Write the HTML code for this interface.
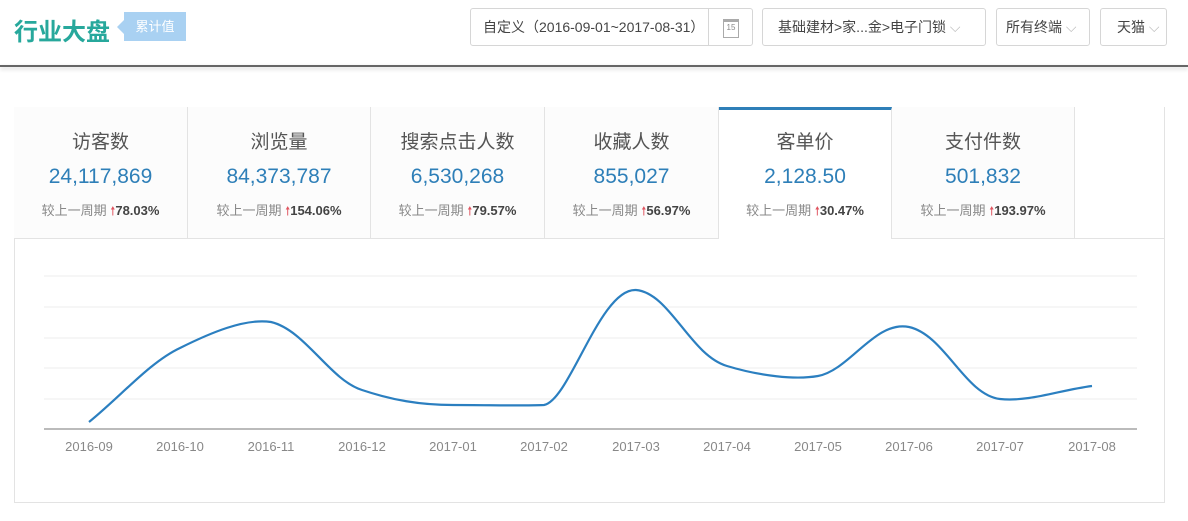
<html><head><style>
body{margin:0;width:1188px;height:521px;background:#fff;font-family:"Liberation Sans","Noto Sans CJK SC",sans-serif;position:relative;overflow:hidden}
.a{position:absolute}
.box{position:absolute;top:8px;height:38px;border:1px solid #d6d6d6;border-radius:3px;box-sizing:border-box;font-size:14px;color:#444;line-height:36px}
.tab{position:absolute;top:107px;height:132px;box-sizing:border-box;border-right:1px solid #e3e3e3;border-bottom:1px solid #e3e3e3;background:#fcfcfc;text-align:center}
.tab .t{margin-top:20px;font-size:19px;color:#555}
.tab .v{margin-top:11px;font-size:21px;color:#2e7fb8}
.tab .c{margin-top:11px;font-size:13px;color:#888}
.tab .c b{color:#444}
.tab .c i{color:#e0545f;font-style:normal;font-size:12px}
.lb{position:absolute;top:439px;font-size:13px;color:#888;width:80px;text-align:center}
</style></head><body>
<div class="a" style="left:14px;top:12px;font-size:24px;font-weight:bold;color:#27a89c">行业大盘</div>
<div class="a" style="left:117px;top:20px;width:0;height:0;border:7px solid transparent;border-right-color:#a9d1f2;border-left:0"></div>
<div class="a" style="left:124px;top:12px;width:62px;height:29px;background:#a9d1f2;color:#fff;font-size:13px;line-height:29px;text-align:center">累计值</div>
<div class="box" style="left:470px;width:283px;padding-left:12px">自定义（2016-09-01~2017-08-31）<span class="a" style="left:237px;top:0;height:36px;border-left:1px solid #d6d6d6;width:44px"></span><span class="a" style="left:252px;top:10px;width:14px;height:15px;border:1px solid #aaa;border-top:3px solid #aaa;font-size:8px;line-height:12px;text-align:center;color:#888">15</span></div>
<div class="box" style="left:762px;width:224px;padding-left:15px">基础建材>家...金>电子门锁 <span style="color:#bbb">⌵</span></div>
<div class="box" style="left:996px;width:94px;padding-left:9px">所有终端 <span style="color:#bbb">⌵</span></div>
<div class="box" style="left:1100px;width:67px;padding-left:16px">天猫 <span style="color:#bbb">⌵</span></div>
<div class="a" style="left:0;top:65px;width:1188px;height:2px;background:#666;box-shadow:0 2px 4px rgba(0,0,0,.2)"></div>
<div class="a" style="left:14px;top:107px;width:1151px;height:396px;border:1px solid #e3e3e3;box-sizing:border-box"></div>
<div class="tab" style="left:14px;width:174px"><div class="t">访客数</div><div class="v">24,117,869</div><div class="c">较上一周期 <i>🠕</i><b>78.03%</b></div></div>
<div class="tab" style="left:188px;width:183px"><div class="t">浏览量</div><div class="v">84,373,787</div><div class="c">较上一周期 <i>🠕</i><b>154.06%</b></div></div>
<div class="tab" style="left:371px;width:174px"><div class="t">搜索点击人数</div><div class="v">6,530,268</div><div class="c">较上一周期 <i>🠕</i><b>79.57%</b></div></div>
<div class="tab" style="left:545px;width:174px"><div class="t">收藏人数</div><div class="v">855,027</div><div class="c">较上一周期 <i>🠕</i><b>56.97%</b></div></div>
<div class="tab" style="left:719px;width:173px;background:#fff;border-bottom:none;border-top:3px solid #2e7fb8"><div class="t" style="margin-top:17px">客单价</div><div class="v">2,128.50</div><div class="c">较上一周期 <i>🠕</i><b>30.47%</b></div></div>
<div class="tab" style="left:892px;width:183px"><div class="t">支付件数</div><div class="v">501,832</div><div class="c">较上一周期 <i>🠕</i><b>193.97%</b></div></div>
<div class="tab" style="left:1075px;width:89px;border-right:none;background:#fff"></div>
<svg class="a" style="left:0;top:0" width="1188" height="521">
<g stroke="#eee" stroke-width="1"><line x1="44" x2="1137" y1="276" y2="276"/><line x1="44" x2="1137" y1="307" y2="307"/><line x1="44" x2="1137" y1="338" y2="338"/><line x1="44" x2="1137" y1="368" y2="368"/><line x1="44" x2="1137" y1="399" y2="399"/></g>
<line x1="44" x2="1137" y1="429" y2="429" stroke="#bbb" stroke-width="2"/>
<path fill="none" stroke="#2b7fc0" stroke-width="2.2" d="M89,422 C120,397 150,362 180,348 C210,333 245,318 271,322 C305,330 330,380 362,390 C392,400 420,405 453,405 C490,405 520,406 544,405 C570,400 600,288 636,290 C670,293 690,355 727,366 C760,376 795,380 818,376 C850,370 875,320 909,327 C945,335 965,395 1000,399 C1030,402 1060,390 1092,386"/>
</svg>
<div class="lb" style="left:49px">2016-09</div><div class="lb" style="left:140px">2016-10</div><div class="lb" style="left:231px">2016-11</div><div class="lb" style="left:322px">2016-12</div><div class="lb" style="left:413px">2017-01</div><div class="lb" style="left:504px">2017-02</div><div class="lb" style="left:596px">2017-03</div><div class="lb" style="left:687px">2017-04</div><div class="lb" style="left:778px">2017-05</div><div class="lb" style="left:869px">2017-06</div><div class="lb" style="left:960px">2017-07</div><div class="lb" style="left:1052px">2017-08</div>
</body></html>
